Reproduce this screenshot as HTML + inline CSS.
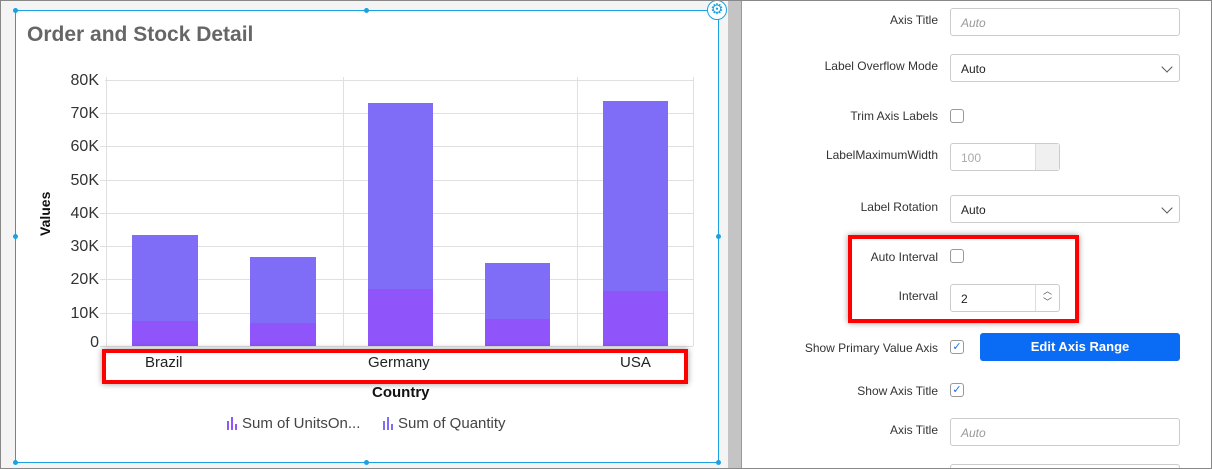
<!DOCTYPE html>
<html style="overflow:hidden;width:1212px;height:469px"><head><style>
*{box-sizing:border-box;margin:0;padding:0}
body{width:1212px;height:469px;position:relative;overflow:hidden;background:#f4f4f4;font-family:"Liberation Sans",sans-serif;}
.abs{position:absolute}
.lbl{position:absolute;right:274px;font-size:12px;color:#333;text-align:right;white-space:nowrap}
.inp{position:absolute;left:950px;width:230px;height:28px;border:1px solid #ccc;border-radius:3px;background:#fff;font-size:12px;padding:7px 10px;color:#222}
.cb{position:absolute;left:950px;width:14px;height:14px;border:1px solid #999;border-radius:3px;background:#fff}
.chev{position:absolute;right:8px;top:8px;width:8px;height:8px;border-right:1.3px solid #555;border-bottom:1.3px solid #555;transform:rotate(45deg)}
.yl{position:absolute;right:1113px;font-size:16px;color:#333}
</style></head><body>
<div class="abs" style="left:1px;top:1px;width:727px;height:467px;background:#f4f4f4"></div>
<div class="abs" style="left:728px;top:1px;width:13px;height:467px;background:#c4c4c4"></div>
<div class="abs" style="left:741px;top:1px;width:1px;height:467px;background:#999"></div>
<div class="abs" style="left:742px;top:1px;width:469px;height:467px;background:#fff"></div>
<!-- widget -->
<div class="abs" style="left:15px;top:10px;width:704px;height:453px;background:#fff;border:1px solid #1ba1e2"></div>
<div class="abs" style="left:13px;top:8px;width:5px;height:5px;border-radius:50%;background:#1ba1e2"></div>
<div class="abs" style="left:364px;top:8px;width:5px;height:5px;border-radius:50%;background:#1ba1e2"></div>
<div class="abs" style="left:13px;top:234px;width:5px;height:5px;border-radius:50%;background:#1ba1e2"></div>
<div class="abs" style="left:716px;top:234px;width:5px;height:5px;border-radius:50%;background:#1ba1e2"></div>
<div class="abs" style="left:13px;top:460px;width:5px;height:5px;border-radius:50%;background:#1ba1e2"></div>
<div class="abs" style="left:364px;top:460px;width:5px;height:5px;border-radius:50%;background:#1ba1e2"></div>
<div class="abs" style="left:716px;top:460px;width:5px;height:5px;border-radius:50%;background:#1ba1e2"></div>
<div class="abs" style="left:707px;top:0px;width:20px;height:20px;border-radius:50%;background:#fff;border:1px solid #1ba1e2;color:#1ba1e2;font-size:15px;line-height:17px;text-align:center">⚙</div>
<div class="abs" style="left:27px;top:23px;font-size:21px;font-weight:bold;color:#666">Order and Stock Detail</div>
<svg class="abs" style="left:0;top:0" width="728" height="469">
<g stroke="#e0e0e0" stroke-width="1">
<line x1="105" y1="80.5" x2="693" y2="80.5"/><line x1="100" y1="113.5" x2="693" y2="113.5"/><line x1="100" y1="146.5" x2="693" y2="146.5"/><line x1="100" y1="180.5" x2="693" y2="180.5"/><line x1="100" y1="213.5" x2="693" y2="213.5"/><line x1="100" y1="246.5" x2="693" y2="246.5"/><line x1="100" y1="279.5" x2="693" y2="279.5"/><line x1="100" y1="313.5" x2="693" y2="313.5"/><line x1="100" y1="346.5" x2="693" y2="346.5"/>
<line x1="106.5" y1="77" x2="106.5" y2="346"/><line x1="343.5" y1="77" x2="343.5" y2="346"/><line x1="577.5" y1="77" x2="577.5" y2="346"/><line x1="693.5" y1="77" x2="693.5" y2="346"/>
</g>
<g fill="#7f6cf7"><rect x="132" y="235" width="66" height="111"/><rect x="250" y="257" width="66" height="89"/><rect x="368" y="103" width="65" height="243"/><rect x="485" y="263" width="65" height="83"/><rect x="603" y="101" width="65" height="245"/></g>
<g fill="#8f55fb"><rect x="132" y="321" width="66" height="25"/><rect x="250" y="323" width="66" height="23"/><rect x="368" y="289" width="65" height="57"/><rect x="485" y="319" width="65" height="27"/><rect x="603" y="291" width="65" height="55"/></g>
</svg>
<div class="yl" style="top:72px">80K</div><div class="yl" style="top:105px">70K</div><div class="yl" style="top:138px">60K</div><div class="yl" style="top:172px">50K</div><div class="yl" style="top:205px">40K</div><div class="yl" style="top:238px">30K</div><div class="yl" style="top:271px">20K</div><div class="yl" style="top:305px">10K</div><div class="yl" style="top:334px">0</div>
<div class="abs" style="left:37px;top:236px;transform:rotate(-90deg);transform-origin:left top;font-size:14px;font-weight:bold;color:#111">Values</div>
<div class="abs" style="left:102px;top:349px;width:586px;height:35px;border:4px solid #f00;box-shadow:0 0 6px rgba(0,0,0,.4)"></div>
<div class="abs" style="left:145px;top:354px;font-size:15px;color:#222">Brazil</div>
<div class="abs" style="left:368px;top:354px;font-size:15px;color:#222">Germany</div>
<div class="abs" style="left:620px;top:354px;font-size:15px;color:#222">USA</div>
<div class="abs" style="left:372px;top:384px;font-size:15px;font-weight:bold;color:#111">Country</div>
<svg class="abs" style="left:226px;top:416px" width="14" height="14"><rect x="1" y="5" width="2" height="9" fill="#8f55fb"/><rect x="5" y="1" width="2" height="13" fill="#8f55fb"/><rect x="9" y="8" width="2" height="6" fill="#8f55fb"/></svg>
<div class="abs" style="left:242px;top:415px;font-size:15px;color:#444">Sum of UnitsOn...</div>
<svg class="abs" style="left:382px;top:416px" width="14" height="14"><rect x="1" y="5" width="2" height="9" fill="#7f6cf7"/><rect x="5" y="1" width="2" height="13" fill="#7f6cf7"/><rect x="9" y="8" width="2" height="6" fill="#7f6cf7"/></svg>
<div class="abs" style="left:398px;top:415px;font-size:15px;color:#444">Sum of Quantity</div>
<!-- right panel -->
<div class="lbl" style="top:13px">Axis Title</div>
<div class="inp" style="top:8px;color:#999;font-style:italic">Auto</div>
<div class="lbl" style="top:59px">Label Overflow Mode</div>
<div class="inp" style="top:54px">Auto<div class="chev"></div></div>
<div class="lbl" style="top:109px">Trim Axis Labels</div>
<div class="cb" style="top:109px"></div>
<div class="lbl" style="top:148px">LabelMaximumWidth</div>
<div class="inp" style="top:143px;width:110px;color:#aaa;background:#fff">100<div class="abs" style="right:0;top:0;width:24px;height:26px;background:#f0f0f0;border-left:1px solid #ddd"></div></div>
<div class="lbl" style="top:200px">Label Rotation</div>
<div class="inp" style="top:195px">Auto<div class="chev"></div></div>
<div class="abs" style="left:848px;top:235px;width:231px;height:88px;border:4px solid #f00;box-shadow:0 0 6px rgba(0,0,0,.4)"></div>
<div class="lbl" style="top:250px">Auto Interval</div>
<div class="cb" style="top:249px"></div>
<div class="lbl" style="top:289px">Interval</div>
<div class="inp" style="top:284px;width:110px">2<div class="abs" style="right:0;top:0;width:24px;height:26px;border-left:1px solid #ddd;font-size:9px;color:#555;text-align:center;line-height:11px;padding-top:1px">︿<br>﹀</div></div>
<div class="lbl" style="top:341px">Show Primary Value Axis</div>
<div class="cb" style="top:340px;color:#1a6ef5;font-size:11px;line-height:12px;text-align:center">✓</div>
<div class="abs" style="left:980px;top:333px;width:200px;height:28px;background:#0a6cf5;border-radius:3px;color:#fff;font-weight:bold;font-size:13px;text-align:center;line-height:28px">Edit Axis Range</div>
<div class="lbl" style="top:384px">Show Axis Title</div>
<div class="cb" style="top:383px;color:#1a6ef5;font-size:11px;line-height:12px;text-align:center">✓</div>
<div class="lbl" style="top:423px">Axis Title</div>
<div class="inp" style="top:418px;color:#999;font-style:italic">Auto</div>
<div class="abs" style="left:950px;top:464px;width:230px;height:5px;border:1px solid #ccc;border-bottom:none;border-radius:3px 3px 0 0"></div>
<div class="abs" style="left:0;top:0;width:1212px;height:469px;border:1px solid #888;"></div>
</body></html>
